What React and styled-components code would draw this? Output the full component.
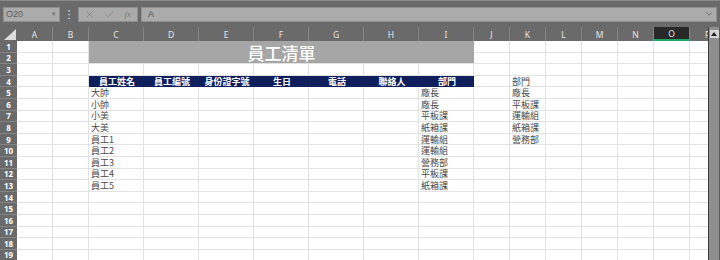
import styled, { createGlobalStyle } from "styled-components";
import { X, Check, ChevronDown } from "lucide-react";

const GlobalStyle = createGlobalStyle`
  html, body {
    margin: 0;
    padding: 0;
    background: #ffffff;
  }
  body {
    font-family: "Noto Sans CJK TC", "Noto Sans", sans-serif;
  }
`;

const COLS = ["A", "B", "C", "D", "E", "F", "G", "H", "I", "J", "K", "L", "M", "N", "O", "P"];
const ROWS = 19;

const HEADERS = ["員工姓名", "員工編號", "身份證字號", "生日", "電話", "聯絡人", "部門"];
const NAMES = ["大帥", "小帥", "小美", "大美", "員工1", "員工2", "員工3", "員工4", "員工5"];
const DEPTS = ["廠長", "廠長", "平板課", "紙箱課", "運輸組", "運輸組", "營務部", "平板課", "紙箱課"];
const DEPT_LIST = ["部門", "廠長", "平板課", "運輸組", "紙箱課", "營務部"];

// text of a normal cell, by sheet row (1-based) and column index (A = 0)
const cellText = (row, col) => {
  if (col === 2 && row >= 5 && row <= 13) return NAMES[row - 5];
  if (col === 8 && row >= 5 && row <= 13) return DEPTS[row - 5];
  if (col === 10 && row >= 4 && row <= 9) return DEPT_LIST[row - 4];
  return "";
};

const App = () => {
  const cells = [];
  for (let r = 1; r <= ROWS; r++) {
    cells.push(<RowHead key={`h${r}`}>{r}</RowHead>);
    COLS.forEach((c, i) => {
      const key = `${c}${r}`;
      if (r === 1 && i === 2) {
        cells.push(<TitleCell key={key}>員工清單</TitleCell>);
        return;
      }
      // covered by the merged title C1:I2
      if (r <= 2 && i >= 2 && i <= 8) return;
      if (r === 4 && i >= 2 && i <= 8) {
        cells.push(
          <Cell key={key} $head>
            {HEADERS[i - 2]}
          </Cell>
        );
        return;
      }
      cells.push(<Cell key={key}>{cellText(r, i)}</Cell>);
    });
  }

  return (
    <>
      <GlobalStyle />
      <Page>
        <FormulaBar>
          <NameBox>
            O20
            <Caret>▾</Caret>
          </NameBox>
          <Dots>⋮</Dots>
          <ActionBox>
            <X size={11} strokeWidth={1.5} />
            <Check size={11} strokeWidth={1.5} />
            <Fx>fx</Fx>
          </ActionBox>
          <FormulaInput>
            A
            <ChevronDown size={10} strokeWidth={1.6} />
          </FormulaInput>
        </FormulaBar>
        <SheetArea>
          <GridClip>
            <Grid>
              <Corner>
                <svg width="12" height="11" viewBox="0 0 12 11">
                  <polygon points="12,0 12,11 0,11" fill="#dcdcdc" />
                </svg>
              </Corner>
              {COLS.map((c) => (
                <ColHead key={c} $active={c === "O"}>
                  {c}
                </ColHead>
              ))}
              {cells}
            </Grid>
          </GridClip>
          <ScrollBar>
            <ScrollButton>
              <svg width="6" height="4" viewBox="0 0 6 4">
                <polygon points="3,0 6,4 0,4" fill="#222" />
              </svg>
            </ScrollButton>
          </ScrollBar>
        </SheetArea>
      </Page>
    </>
  );
};

const Page = styled.div`
  width: 720px;
  height: 260px;
  overflow: hidden;
  display: flex;
  flex-direction: column;
  background: #fff;
`;

const FormulaBar = styled.div`
  height: 27px;
  flex: none;
  display: flex;
  align-items: center;
  padding: 0 3px;
  box-sizing: border-box;
  background: #6a6a6a;
  border-top: 1px solid #8a8a8a;
`;

const Box = styled.div`
  height: 15px;
  box-sizing: border-box;
  background: #ababab;
  border: 1px solid #8e8e8e;
  display: flex;
  align-items: center;
  color: #5c5c5c;
  font-family: "Liberation Sans", sans-serif;
  font-size: 9px;
`;

const NameBox = styled(Box)`
  width: 57px;
  padding: 0 3px 0 2px;
  justify-content: space-between;
`;

const Caret = styled.span`
  font-size: 7px;
  color: #777;
`;

const Dots = styled.span`
  width: 18px;
  text-align: center;
  color: #e0e0e0;
  font-size: 11px;
  font-family: "DejaVu Sans", sans-serif;
`;

const ActionBox = styled(Box)`
  width: 60px;
  justify-content: space-between;
  padding: 0 6px 0 5px;
  color: #7b7b7b;
`;

const Fx = styled.span`
  font-family: "Liberation Serif", serif;
  font-style: italic;
  font-size: 9px;
  color: #7b7b7b;
`;

const FormulaInput = styled(Box)`
  flex: 1;
  margin-left: 3px;
  padding: 0 2px 0 6px;
  justify-content: space-between;
  color: #555;
`;

const SheetArea = styled.div`
  flex: 1;
  display: flex;
  min-height: 0;
`;

const GridClip = styled.div`
  width: 708px;
  flex: none;
  overflow: hidden;
`;

const Grid = styled.div`
  display: grid;
  grid-template-columns: 17px 36px 36px repeat(7, 55px) repeat(7, 36px);
  grid-template-rows: 14px repeat(${ROWS}, 11.6px);
  align-content: start;
`;

const Corner = styled.div`
  background: #6a6a6a;
  display: flex;
  align-items: flex-end;
  justify-content: flex-end;
  padding: 0 1px 1px 0;
  box-sizing: border-box;
`;

const ColHead = styled.div`
  background: ${(p) => (p.$active ? "#282828" : "#6a6a6a")};
  border-right: 1px solid #858585;
  border-bottom: ${(p) => (p.$active ? "2px solid #21a366" : "none")};
  box-sizing: border-box;
  color: #e6e6e6;
  font-family: "Noto Sans", sans-serif;
  font-size: 8.5px;
  display: flex;
  align-items: center;
  justify-content: center;
`;

const RowHead = styled.div`
  background: #6a6a6a;
  border-bottom: 1px solid #848484;
  box-sizing: border-box;
  color: #fff;
  font-family: "Noto Sans", sans-serif;
  font-weight: 700;
  font-size: 8px;
  display: flex;
  align-items: center;
  justify-content: center;
`;

const Cell = styled.div`
  box-sizing: border-box;
  border-right: 1px solid ${(p) => (p.$head ? "#0f1f5c" : "#e2e2e2")};
  border-bottom: 1px solid ${(p) => (p.$head ? "#0f1f5c" : "#e2e2e2")};
  background: ${(p) => (p.$head ? "#0f1f5c" : "#fff")};
  color: ${(p) => (p.$head ? "#fff" : "#4a4a4a")};
  font-weight: ${(p) => (p.$head ? 700 : 400)};
  font-size: 9px;
  line-height: 11px;
  padding-left: 2px;
  white-space: nowrap;
  overflow: hidden;
  display: flex;
  align-items: center;
  justify-content: ${(p) => (p.$head ? "center" : "flex-start")};
`;

const TitleCell = styled.div`
  grid-column: span 7;
  grid-row: span 2;
  background: #a6a6a6;
  color: #fff;
  font-size: 17px;
  font-weight: 500;
  display: flex;
  align-items: center;
  justify-content: center;
  border-bottom: 1px solid #e2e2e2;
  box-sizing: border-box;
`;

const ScrollBar = styled.div`
  width: 12px;
  flex: none;
  background: #8e8e8e;
  border-left: 1px solid #3c3c3c;
  border-right: 1px solid #5a5a5a;
  box-sizing: border-box;
  padding-top: 3px;
  display: flex;
  flex-direction: column;
  align-items: center;
`;

const ScrollButton = styled.div`
  width: 9px;
  height: 8px;
  background: #d6d6d6;
  display: flex;
  align-items: center;
  justify-content: center;
`;

export default App;
